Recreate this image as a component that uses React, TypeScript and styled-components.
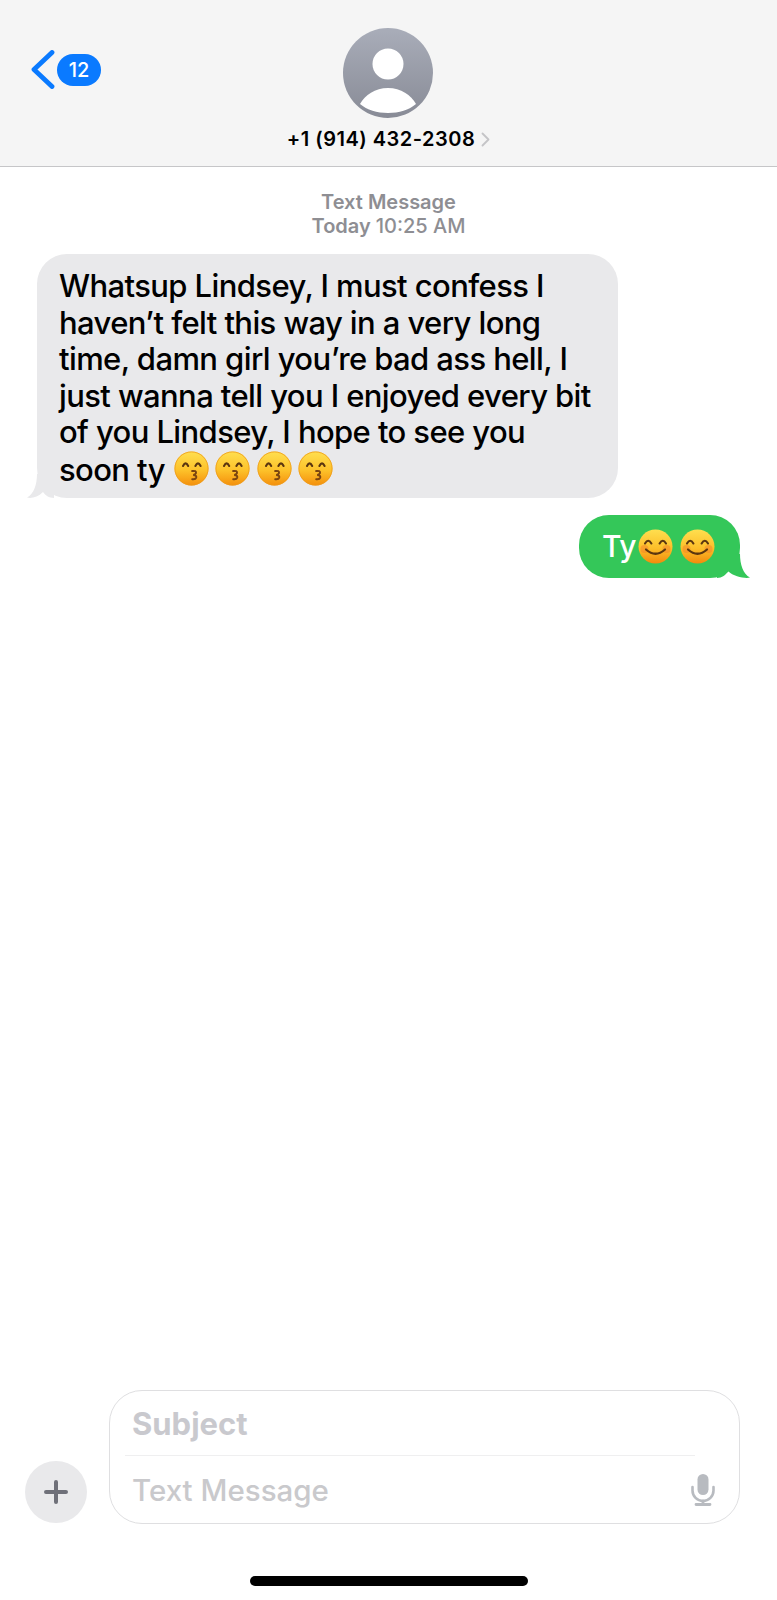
import React from "react";
import styled, { createGlobalStyle } from "styled-components";

const Global = createGlobalStyle`
  html, body { margin: 0; padding: 0; background: #fff; }
  body { font-family: Inter, "Liberation Sans", sans-serif; -webkit-font-smoothing: antialiased; }
`;

const Page = styled.div`
  width: 777px;
  height: 1600px;
  display: flex;
  flex-direction: column;
  background: #fff;
  overflow: hidden;
`;

const Header = styled.header`
  height: 166px;
  box-sizing: content-box;
  flex: none;
  background: #f5f5f5;
  border-bottom: 1px solid #c6c6c8;
  display: grid;
  grid-template-columns: 1fr auto 1fr;
`;

const Back = styled.div`
  display: flex;
  align-items: center;
  gap: 2px;
  padding: 50px 0 0 31px;
  height: 39px;
`;

const Badge = styled.span`
  width: 44px;
  height: 32px;
  border-radius: 16px;
  background: #0a7aff;
  color: #fff;
  font-size: 20px;
  font-weight: 500;
  display: flex;
  align-items: center;
  justify-content: center;
`;

const Contact = styled.div`
  display: flex;
  flex-direction: column;
  align-items: center;
  padding-top: 28px;
`;

const Avatar = styled.div`
  width: 90px;
  height: 90px;
  border-radius: 50%;
  overflow: hidden;
  background: linear-gradient(#a9adb9, #888b96);
`;

const PhoneRow = styled.div`
  display: flex;
  align-items: center;
  gap: 6px;
  margin-top: 8px;
  font-size: 20px;
  line-height: 26px;
  font-weight: 600;
  letter-spacing: 0.5px;
  color: #000;
  white-space: nowrap;
`;

const Thread = styled.main`
  flex: 1;
  display: flex;
  flex-direction: column;
`;

const Stamp = styled.div`
  margin-top: 24px;
  text-align: center;
  color: #8e8e93;
  font-size: 20px;
  line-height: 23.5px;
  font-weight: 600;
`;

const StampTime = styled.span`
  font-weight: 500;
`;

const Bubble = styled.div<{ $out?: boolean }>`
  position: relative;
  box-sizing: border-box;
  align-self: ${(p) => (p.$out ? "flex-end" : "flex-start")};
  margin: ${(p) => (p.$out ? "17px 37px 0 0" : "16px 0 0 37px")};
  background: ${(p) => (p.$out ? "#34c759" : "#e9e9eb")};
  color: ${(p) => (p.$out ? "#fff" : "#000")};
  border-radius: 30px;
  white-space: nowrap;
`;

const Received = styled(Bubble)`
  width: 581px;
  height: 244px;
  padding: 14px 0 0 22px;
  font-size: 31px;
  line-height: 36.6px;
  font-weight: 500;
  letter-spacing: -0.6px;
`;

const Sent = styled(Bubble)`
  width: 161px;
  height: 63px;
  padding: 13px 0 0 23px;
  display: flex;
  align-items: flex-start;
  font-size: 30px;
  line-height: 36.6px;
  font-weight: 500;
  letter-spacing: -0.4px;
`;

const Tail = styled.svg<{ $out?: boolean }>`
  position: absolute;
  bottom: 0;
  width: 26px;
  height: 24px;
  overflow: visible;
  ${(p) => (p.$out ? "right: -11px;" : "left: -11px;")}
`;

const EmojiRun = styled.span`
  display: inline-flex;
  gap: 6.5px;
  vertical-align: -5px;
  margin-left: 9px;
`;

const SentEmojis = styled.span`
  display: flex;
  gap: 7px;
  margin: 1px 0 0 2px;
`;

const Composer = styled.section`
  flex: none;
  display: flex;
  align-items: flex-end;
  gap: 22px;
  padding: 0 37px 0 25px;
`;

const PlusButton = styled.div`
  flex: none;
  width: 62px;
  height: 62px;
  margin-bottom: 1px;
  border-radius: 50%;
  background: #e9e9eb;
  display: flex;
  align-items: center;
  justify-content: center;
`;

const InputBox = styled.div`
  flex: 1;
  box-sizing: border-box;
  height: 134px;
  border: 1.5px solid #dfdfe1;
  border-radius: 33px;
  display: flex;
  flex-direction: column;
`;

const SubjectRow = styled.div`
  height: 65px;
  flex: none;
  box-sizing: border-box;
  margin: 0 44px 0 15px;
  padding-left: 7px;
  border-bottom: 1px solid #efeff0;
  color: #c9c9ce;
  font-size: 31px;
  font-weight: 700;
  line-height: 66px;
`;

const MessageRow = styled.div`
  flex: 1;
  display: flex;
  align-items: center;
  justify-content: space-between;
  padding: 0 24px 0 22px;
  color: #c9c9cc;
  font-size: 29.5px;
  font-weight: 500;
`;

const HomeZone = styled.div`
  flex: none;
  height: 76px;
  display: flex;
  justify-content: center;
  padding-top: 52px;
  box-sizing: border-box;
`;

const HomeBar = styled.div`
  width: 278px;
  height: 10px;
  border-radius: 5px;
  background: #000;
`;

const KissEmoji = ({ id }: { id: string }) => (
  <svg width="35" height="35" viewBox="0 0 35 35" aria-hidden="true">
    <defs>
      <linearGradient id={id} x1="0" y1="0" x2="0" y2="1">
        <stop offset="0" stopColor="#ffdf4f" />
        <stop offset="0.55" stopColor="#fdc22a" />
        <stop offset="1" stopColor="#f48f0c" />
      </linearGradient>
    </defs>
    <circle cx="17.5" cy="17.5" r="17" fill={`url(#${id})`} />
    <circle cx="17.5" cy="17.5" r="16.6" fill="none" stroke="#ee9a1c" strokeWidth="0.8" />
    <path d="M9 15q2.6-5.2 5.2 0M21.4 15q2.6-5.2 5.2 0" fill="none" stroke="#5b3610" strokeWidth="2.1" strokeLinecap="round" />
    <path d="M18.2 20q4.2-.6 3.8 2.1q-.4 1.5-2.8 1.8q3.6.3 3 2.7q-.7 2.1-4 1.6" fill="none" stroke="#7a4410" strokeWidth="2" strokeLinecap="round" />
  </svg>
);

const SmileEmoji = ({ id }: { id: string }) => (
  <svg width="35" height="35" viewBox="0 0 35 35" aria-hidden="true">
    <defs>
      <linearGradient id={id} x1="0" y1="0" x2="0" y2="1">
        <stop offset="0" stopColor="#ffdf4f" />
        <stop offset="0.55" stopColor="#fdbf2a" />
        <stop offset="1" stopColor="#f28a0c" />
      </linearGradient>
    </defs>
    <circle cx="17.5" cy="17.5" r="17" fill={`url(#${id})`} />
    <circle cx="6.5" cy="20" r="4" fill="#f47f2c" opacity="0.5" />
    <circle cx="28.5" cy="20" r="4" fill="#f47f2c" opacity="0.5" />
    <path d="M7 14.5q3.2-5.4 6.4 0M21.6 14.5q3.2-5.4 6.4 0" fill="none" stroke="#5b3610" strokeWidth="2.1" strokeLinecap="round" />
    <path d="M8 20.5q9.5 8.5 19 0" fill="none" stroke="#5b3610" strokeWidth="2.2" strokeLinecap="round" />
  </svg>
);

export default function App() {
  return (
    <Page>
      <Global />
      <Header>
        <Back>
          <svg width="24" height="39" viewBox="0 0 24 39" aria-hidden="true">
            <path d="M21 2.5 3 19.5 21 36.5" fill="none" stroke="#0a7aff" strokeWidth="4.8" strokeLinecap="round" strokeLinejoin="round" />
          </svg>
          <Badge>12</Badge>
        </Back>
        <Contact>
          <Avatar>
            <svg width="90" height="90" viewBox="0 0 90 90" aria-hidden="true">
              <circle cx="45" cy="36" r="15.5" fill="#fff" />
              <path d="M17 76C22 67 32 60 45 60s23 7 28 16c-7 6-17 9-28 9s-21-3-28-9Z" fill="#fff" />
            </svg>
          </Avatar>
          <PhoneRow>
            +1 (914) 432-2308
            <svg width="9" height="15" viewBox="0 0 9 15" aria-hidden="true">
              <path d="M1.5 1.5 7.5 7.5 1.5 13.5" fill="none" stroke="#c4c4c7" strokeWidth="1.8" strokeLinecap="round" strokeLinejoin="round" />
            </svg>
          </PhoneRow>
        </Contact>
        <div />
      </Header>
      <Thread>
        <Stamp>
          Text Message
          <br />
          Today <StampTime>10:25 AM</StampTime>
        </Stamp>
        <Received>
          Whatsup Lindsey, I must confess I
          <br />
          haven’t felt this way in a very long
          <br />
          time, damn girl you’re bad ass hell, I
          <br />
          just wanna tell you I enjoyed every bit
          <br />
          of you Lindsey, I hope to see you
          <br />
          soon ty
          <EmojiRun>
            <KissEmoji id="k1" />
            <KissEmoji id="k2" />
            <KissEmoji id="k3" />
            <KissEmoji id="k4" />
          </EmojiRun>
          <Tail viewBox="0 0 26 24" aria-hidden="true">
            <path d="M11 0C11 10 8 20 1 23.6C6 24.6 12 23 17 18C19 21 23 24 28 24V0Z" fill="#e9e9eb" />
          </Tail>
        </Received>
        <Sent $out>
          Ty
          <SentEmojis>
            <SmileEmoji id="s1" />
            <SmileEmoji id="s2" />
          </SentEmojis>
          <Tail $out viewBox="0 0 26 24" aria-hidden="true">
            <path d="M15 0C15 10 18 20 25 23.6C20 24.6 9 23 3 17C1 21 -3 24 -8 24V0Z" fill="#34c759" />
          </Tail>
        </Sent>
      </Thread>
      <Composer>
        <PlusButton>
          <svg width="26" height="26" viewBox="0 0 26 26" aria-hidden="true">
            <path d="M13 3V23M3 13H23" stroke="#6f7079" strokeWidth="4" strokeLinecap="round" />
          </svg>
        </PlusButton>
        <InputBox>
          <SubjectRow>Subject</SubjectRow>
          <MessageRow>
            Text Message
            <svg width="24" height="32" viewBox="0 0 24 32" aria-hidden="true">
              <rect x="6.5" y="0" width="11" height="21" rx="5.5" fill="#b8bbc0" />
              <path d="M1.5 13v3.5a10.5 10.5 0 0 0 21 0V13" fill="none" stroke="#b8bbc0" strokeWidth="2.6" strokeLinecap="round" />
              <path d="M12 27v3M5 30.5H19" stroke="#b8bbc0" strokeWidth="2.8" strokeLinecap="round" />
            </svg>
          </MessageRow>
        </InputBox>
      </Composer>
      <HomeZone>
        <HomeBar />
      </HomeZone>
    </Page>
  );
}
